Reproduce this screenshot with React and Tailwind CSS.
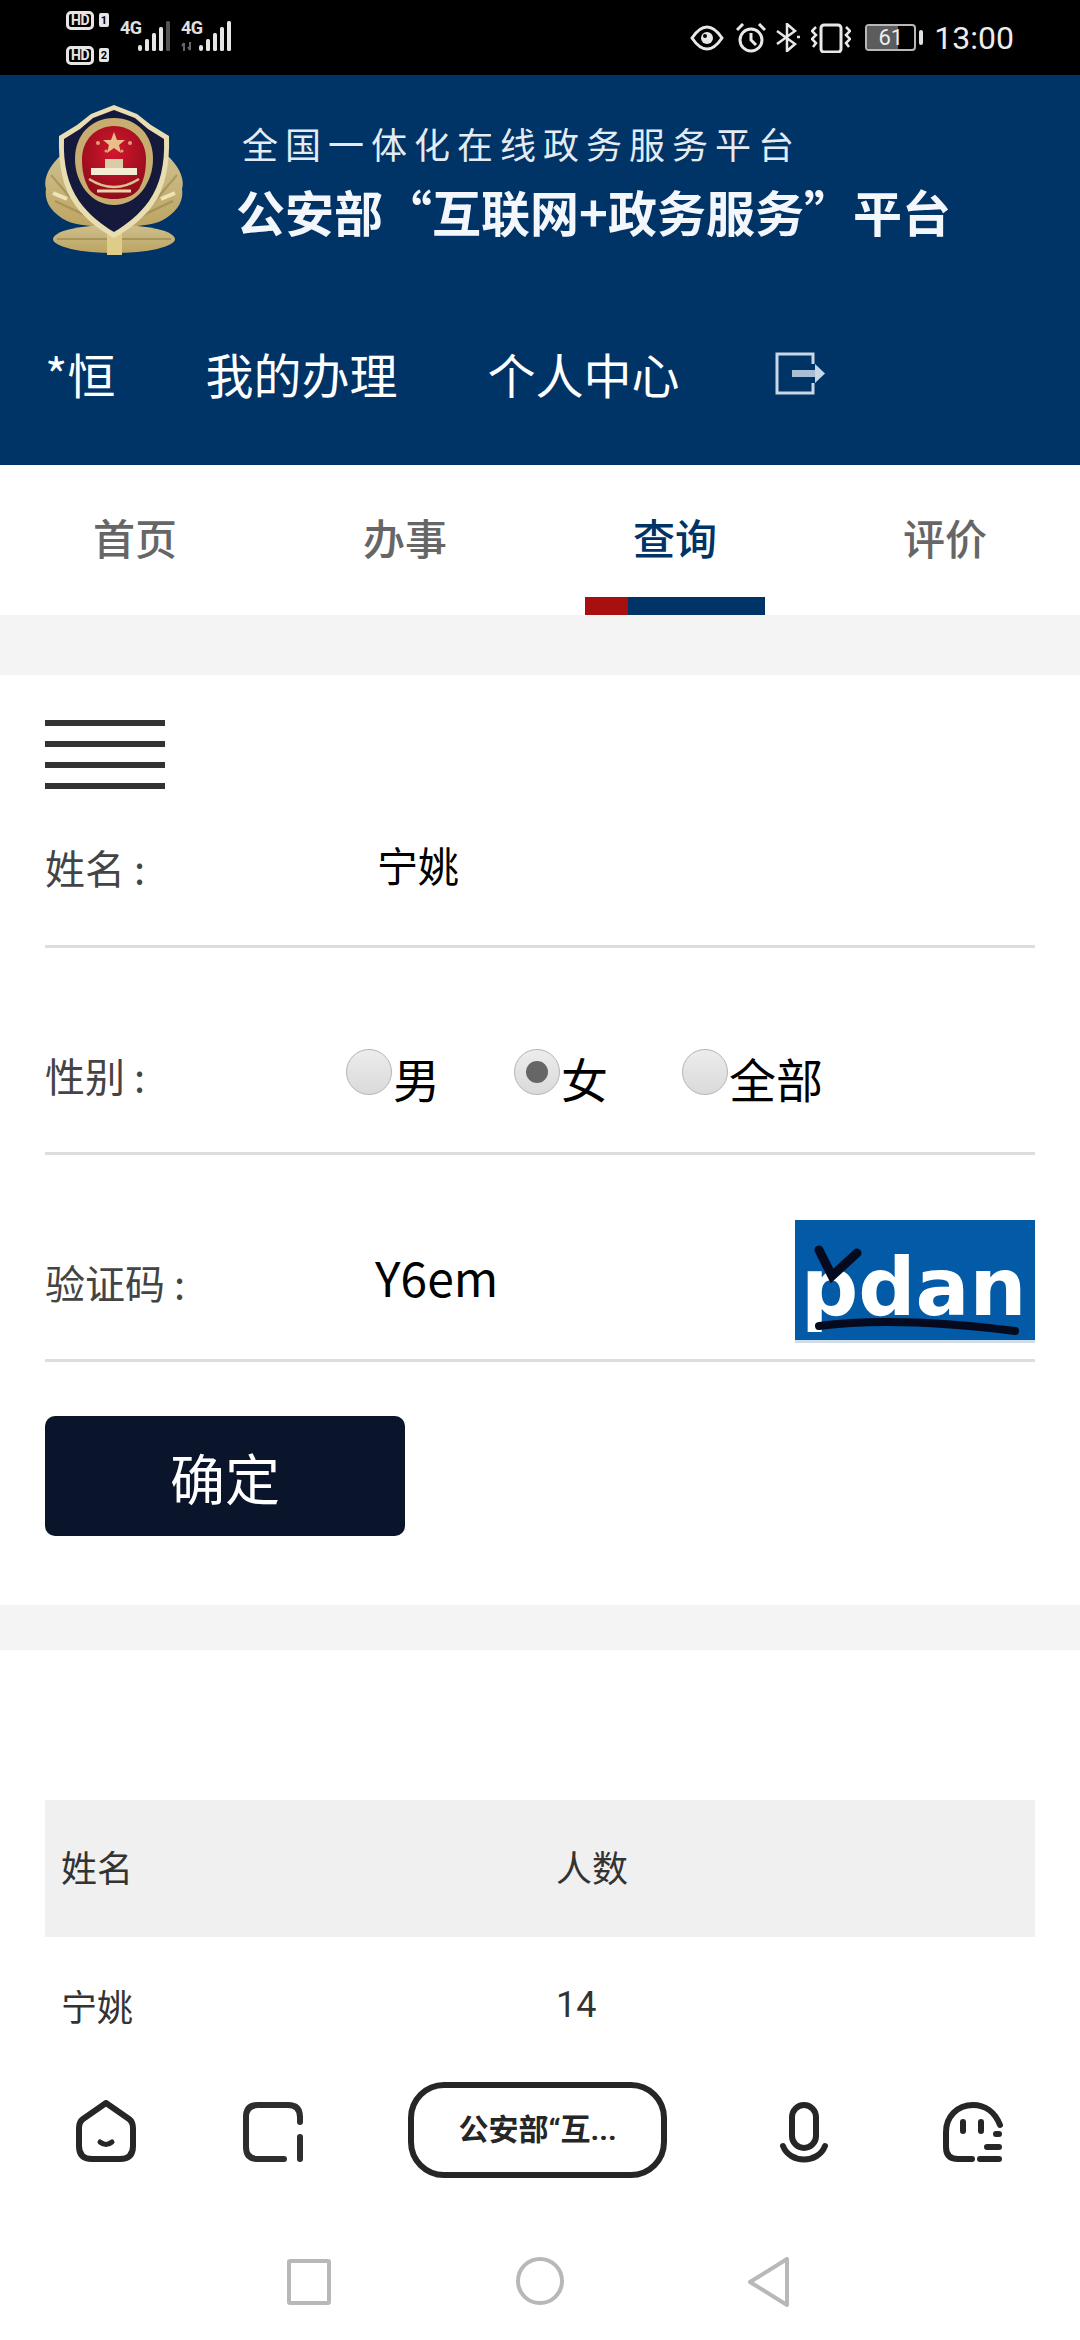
const cjk = "font-['Noto_Sans_CJK_SC',sans-serif]";

const Hd = ({ n }) => (
    <div className="flex items-center gap-[5px]">
        <span className="w-[28px] h-[19px] rounded-[5px] border-[3px] border-[#e6e6e6] flex items-center justify-center text-[14px] leading-none font-bold text-[#e6e6e6] font-['Roboto'] tracking-[-0.5px]">HD</span>
        <span className="w-[10px] h-[14px] rounded-[2px] bg-[#e6e6e6] flex items-center justify-center text-[11px] leading-none font-bold text-black font-['Roboto']">{n}</span>
    </div>
);

const Signal = ({ dim, arrows }) => (
    <div className="flex items-end relative w-[52px] h-[32px]">
        <span className="absolute left-0 top-[-1px] text-[18px] leading-[18px] font-bold text-[#e0e0e0] font-['Roboto'] tracking-[-0.5px]">4G</span>
        <svg width="52" height="32" viewBox="0 0 52 32" fill="none">
            {arrows && <path d="M3 31V23M1 26L3 23M9 22V30M7 27L9 30" stroke="#666" strokeWidth="2" />}
            <rect x="18" y="25" width="4" height="6" rx="2" fill="#e6e6e6" />
            <rect x="25" y="19" width="4" height="12" rx="1.5" fill="#e6e6e6" />
            <rect x="32" y="13" width="4" height="18" rx="1.5" fill="#e6e6e6" />
            <rect x="39" y="7" width="4" height="24" rx="1.5" fill="#e6e6e6" />
            <rect x="46" y="1" width="4" height="30" rx="1.5" fill={dim ? "#555" : "#e6e6e6"} />
        </svg>
    </div>
);

const StatusIcons = () => (
    <div className="flex items-center">
        <svg width="34" height="26" viewBox="0 0 34 26" fill="none" stroke="#e8e8e8" strokeWidth="3">
            <path d="M2 13C8 4 13 2 17 2C21 2 26 4 32 13C26 22 21 24 17 24C13 24 8 22 2 13Z" />
            <circle cx="17" cy="13" r="6" fill="#e8e8e8" stroke="none" />
            <circle cx="15" cy="11" r="2" fill="#000" stroke="none" />
        </svg>
        <svg className="ml-[12px]" width="30" height="30" viewBox="0 0 30 30" fill="none" stroke="#e8e8e8" strokeWidth="3">
            <circle cx="15" cy="17" r="11" />
            <path d="M15 10V17L20 22M1 7L7 1M29 7L23 1" />
        </svg>
        <svg className="ml-[10px]" width="25" height="29" viewBox="0 0 25 29" fill="none" stroke="#e8e8e8" strokeWidth="2.5">
            <path d="M1 8L19 21L11 28V1L19 8L1 21" />
            <path d="M21 14H24" />
        </svg>
        <svg className="ml-[10px]" width="40" height="30" viewBox="0 0 40 30" fill="none" stroke="#e8e8e8" strokeWidth="2.5">
            <rect x="10" y="2" width="20" height="27" rx="3" strokeWidth="3" />
            <path d="M5 4L1 8L5 12L1 16L5 20L2 24M35 4L39 8L35 12L39 16L35 20L38 24" />
        </svg>
        <div className="ml-[14px] relative w-[51px] h-[27px] rounded-[4px] border-2 border-[#b8b8b8] overflow-hidden">
            <div className="absolute left-0 top-0 h-full w-[31px] bg-[#5c5c5c]" />
            <span className="absolute inset-0 flex items-center justify-center text-[22px] leading-none text-[#eee] font-['Roboto']">61</span>
        </div>
        <div className="ml-[3px] w-[4px] h-[15px] rounded-[2px] bg-[#e0e0e0]" />
        <span className="ml-[11px] text-[32px] leading-none text-[#ececec] font-['Roboto']">13:00</span>
    </div>
);

const Emblem = () => (
    <svg width="138" height="150" viewBox="0 0 138 150" className="shrink-0">
        <defs>
            <linearGradient id="gold" x1="0" y1="0" x2="0" y2="1">
                <stop offset="0" stopColor="#cdbf8c" />
                <stop offset="1" stopColor="#bda462" />
            </linearGradient>
            <radialGradient id="red" cx="0.5" cy="0.35" r="0.7">
                <stop offset="0" stopColor="#d4162e" />
                <stop offset="1" stopColor="#8c0b1a" />
            </radialGradient>
        </defs>
        <path d="M14 52C4 62 -2 74 1 84C-1 96 6 108 22 116C40 124 98 124 116 116C132 108 139 96 137 84C140 74 134 62 124 52Z" fill="url(#gold)" />
        <ellipse cx="69" cy="134" rx="61" ry="14" fill="url(#gold)" />
        <path d="M10 96L44 112M128 96L94 112M6 70L30 98M132 70L108 98M12 134H126" stroke="#8d7a42" strokeWidth="2" fill="none" opacity="0.5" />
        <path d="M8 88L22 94M130 88L116 94" stroke="#efe4b4" strokeWidth="4" fill="none" />
        <rect x="62" y="122" width="15" height="28" fill="#dfcc88" />
        <path d="M69 0L92 9L106 20L124 31C125 60 120 84 108 100C98 114 82 126 69 133C56 126 40 114 30 100C18 84 13 60 14 31L32 20L46 9Z" fill="#e8deb2" />
        <path d="M69 5L90 13L103 24L119 34C120 60 115 80 104 96C95 109 81 120 69 127C57 120 43 109 34 96C23 80 18 60 19 34L35 24L48 13Z" fill="#15193b" />
        <path d="M69 13C92 13 108 30 108 54C108 78 92 100 69 100C46 100 30 78 30 54C30 30 46 13 69 13Z" fill="#c7ae70" />
        <path d="M69 21C88 21 101 36 101 54C101 66 99 75 94 84C88 92 78 94 69 94C60 94 50 92 44 84C39 75 37 66 37 54C37 36 50 21 69 21Z" fill="url(#red)" />
        <path d="M69 27L72 35H80L74 40L76 48L69 43L62 48L64 40L58 35H66Z" fill="#e8bf8a" />
        <circle cx="53" cy="38" r="2" fill="#e0a070" />
        <circle cx="85" cy="38" r="2" fill="#e0a070" />
        <circle cx="61" cy="46" r="1.5" fill="#e0a070" />
        <circle cx="77" cy="46" r="1.5" fill="#e0a070" />
        <rect x="60" y="54" width="18" height="10" fill="#d8cda6" />
        <rect x="46" y="63" width="46" height="7" fill="#f4ecd2" />
        <path d="M44 74Q69 90 94 74" stroke="#d8c48c" strokeWidth="2.5" fill="none" />
        <path d="M52 86H86" stroke="#e6d7a8" strokeWidth="3" />
    </svg>
);

const LogoutIcon = () => (
    <svg width="50" height="43" viewBox="0 0 50 43" fill="none" className="ml-[6px]">
        <path d="M38 12V2H2V41H38V31" stroke="#c9d6e6" strokeWidth="3" />
        <path d="M17 21.5H40" stroke="#a9bdd4" strokeWidth="7" />
        <path d="M40 12L50 21.5L40 31Z" fill="#c9d6e6" />
    </svg>
);

const Tab = ({ label, active }) => (
    <div className="relative flex-1 flex items-center justify-center">
        <span className={`text-[42px] leading-none font-medium pb-[6px] ${active ? "text-[#003366]" : "text-[#666]"}`}>{label}</span>
        {active &&
            <div className="absolute bottom-0 left-[45px] w-[180px] h-[18px] flex">
                <div className="w-[43px] bg-[#a81010]"></div>
                <div className="flex-1 bg-[#003366]"></div>
            </div>
        }
    </div>
);

const Radio = ({ label, checked }) => (
    <div className="w-[168px] flex items-center">
        <div className="w-[46px] h-[46px] mt-[-6px] shrink-0 rounded-full border border-[#b5b5b5] bg-linear-to-b from-[#ececec] to-[#dadada] flex items-center justify-center">
            {checked && <div className="w-[22px] h-[22px] rounded-full bg-[#666]"></div>}
        </div>
        <span className="ml-[1px] mt-[4px] text-[47px] leading-none text-black">{label}</span>
    </div>
);

const Captcha = () => (
    <div className="relative w-[240px] shrink-0 ml-auto border-b-[3px] border-[#d0dde8]">
        <div className="h-[120px] bg-[#035aa6] overflow-hidden flex items-end pl-[6px] pb-[12px]">
            <span className="text-[80px] leading-[80px] font-bold text-white font-['DejaVu_Sans'] whitespace-nowrap">pdan</span>
        </div>
        <svg className="absolute left-0 top-0" width="240" height="120" viewBox="0 0 240 120" fill="none" stroke="#050a1e" strokeLinecap="round">
            <path d="M24 30L37 56L62 33" strokeWidth="9" />
            <path d="M24 106Q100 96 220 111" strokeWidth="8" />
        </svg>
    </div>
);

const BrowserBar = () => (
    <div className="h-[170px] bg-white flex items-start pt-[52px] pl-[76px] shrink-0">
        <svg className="mt-[18px]" width="60" height="62" viewBox="0 0 60 62" fill="none" stroke="#262626" strokeWidth="6" strokeLinecap="round" strokeLinejoin="round">
            <path d="M30 3L53 19Q57 22 57 28V46Q57 59 44 59H16Q3 59 3 46V28Q3 22 7 19Z" />
            <path d="M24 42Q30 47 36 42" strokeWidth="5" />
        </svg>
        <svg className="mt-[20px] ml-[107px]" width="60" height="60" viewBox="0 0 60 60" fill="none" stroke="#2e2e2e" strokeWidth="6" strokeLinecap="round">
            <path d="M57 20V15Q57 3 45 3H15Q3 3 3 15V45Q3 57 15 57H41" />
            <path d="M57 35V57" />
        </svg>
        <div className="ml-[105px] w-[259px] h-[96px] rounded-[36px] border-[6px] border-[#262626] flex items-center justify-center text-[30px] font-bold text-[#262626] leading-none font-['Roboto','Noto_Sans_CJK_SC',sans-serif]">公安部“互...</div>
        <svg className="mt-[20px] ml-[113px]" width="48" height="62" viewBox="0 0 48 62" fill="none" stroke="#262626" strokeWidth="6" strokeLinecap="round">
            <rect x="12" y="3" width="24" height="43" rx="12" />
            <path d="M3 44C10 62 38 62 45 44" />
        </svg>
        <svg className="mt-[20px] ml-[115px]" width="60" height="60" viewBox="0 0 60 60" fill="none" stroke="#262626" strokeWidth="6" strokeLinecap="round">
            <path d="M57 23C52 10 42 3 30 3C14 3 3 15 3 30V45Q3 57 15 57H29" />
            <path d="M20 20V29M38 20V29M53 32H56M44 45H56M37 57H56" />
        </svg>
    </div>
);

const NavBar = () => (
    <div className="h-[140px] bg-white flex items-start pt-[57px] pl-[287px] shrink-0">
        <div className="mt-[2px] w-[44px] h-[46px] rounded-[3px] border-[4px] border-[#b8b8b8]"></div>
        <div className="ml-[185px] w-[48px] h-[48px] rounded-full border-[4px] border-[#b8b8b8]"></div>
        <svg className="ml-[184px]" width="42" height="50" viewBox="0 0 42 50" fill="none" stroke="#b8b8b8" strokeWidth="4" strokeLinejoin="round">
            <path d="M39 2V48L2 25Z" />
        </svg>
    </div>
);

const App = () => {
    return (
        <div className={`w-[1080px] h-[2340px] bg-white flex flex-col overflow-hidden ${cjk}`}>
            <div className="h-[75px] bg-black flex items-center justify-between pl-[66px] pr-[66px] shrink-0">
                <div className="flex items-center">
                    <div className="flex flex-col gap-[16px]">
                        <Hd n="1" />
                        <Hd n="2" />
                    </div>
                    <div className="ml-[11px] mt-[-3px] flex gap-[9px]">
                        <Signal dim />
                        <Signal arrows />
                    </div>
                </div>
                <StatusIcons />
            </div>

            <div className="h-[390px] bg-[#003366] pl-[45px] shrink-0 text-white">
                <div className="flex pt-[30px]">
                    <Emblem />
                    <div className="ml-[56px] pt-[20px]">
                        <div className="ml-[3px] text-[36px] leading-[36px] tracking-[7px] whitespace-nowrap text-[#e4ebf3]">全国一体化在线政务服务平台</div>
                        <div className="ml-[-3px] mt-[25px] text-[49px] leading-[50px] font-bold whitespace-nowrap text-[#f3f6fa]">公安部“互联网+政务服务”平台</div>
                    </div>
                </div>
                <div className="mt-[88px] flex items-center gap-[90px] text-[48px] leading-[60px]">
                    <span>*恒</span>
                    <span>我的办理</span>
                    <span>个人中心</span>
                    <LogoutIcon />
                </div>
            </div>

            <div className="h-[150px] flex shrink-0">
                <Tab label="首页" />
                <Tab label="办事" />
                <Tab label="查询" active />
                <Tab label="评价" />
            </div>

            <div className="flex-1 min-h-0 overflow-hidden">
                <div className="h-[60px] bg-[#f4f4f4]"></div>

                <div className="px-[45px] pt-[45px] pb-[69px]">
                    <div className="flex flex-col gap-[15px] w-[120px]">
                        <div className="h-[6px] bg-[#333]"></div>
                        <div className="h-[6px] bg-[#333]"></div>
                        <div className="h-[6px] bg-[#333]"></div>
                        <div className="h-[6px] bg-[#333]"></div>
                    </div>

                    <div className="h-[159px] flex items-center border-b-[3px] border-[#ddd]">
                        <span className="w-[332px] text-[40px] leading-none text-[#444]">姓名 :</span>
                        <span className="text-[41px] leading-none text-black mt-[-5px]">宁姚</span>
                    </div>

                    <div className="h-[207px] pt-[50px] flex items-center border-b-[3px] border-[#ddd]">
                        <span className="w-[301px] text-[40px] leading-none text-[#444]">性别 :</span>
                        <Radio label="男" />
                        <Radio label="女" checked />
                        <Radio label="全部" />
                    </div>

                    <div className="h-[207px] pt-[65px] pb-[16px] flex items-center border-b-[3px] border-[#ddd]">
                        <span className="w-[330px] text-[40px] leading-none text-[#444]">验证码 :</span>
                        <span className="text-[48px] leading-none text-black mt-[-11px]">Y6em</span>
                        <Captcha />
                    </div>

                    <div className="mt-[54px] w-[360px] h-[120px] rounded-[10px] bg-[#0a152b] flex items-center justify-center text-[55px] leading-none text-white">确定</div>
                </div>

                <div className="h-[45px] bg-[#f4f4f4]"></div>

                <div className="px-[45px] pt-[150px]">
                    <div className="grid grid-cols-[511px_1fr] h-[137px] pb-[5px] bg-[#f0f0f0] items-center text-[36px] leading-none text-[#333]">
                        <span className="pl-[16px]">姓名</span>
                        <span>人数</span>
                    </div>
                    <div className="grid grid-cols-[511px_1fr] h-[136px] items-center text-[36px] leading-none text-[#333]">
                        <span className="pl-[16px]">宁姚</span>
                        <span className="font-['Roboto']">14</span>
                    </div>
                </div>
            </div>

            <BrowserBar />
            <NavBar />
        </div>
    )
}

export default App;
